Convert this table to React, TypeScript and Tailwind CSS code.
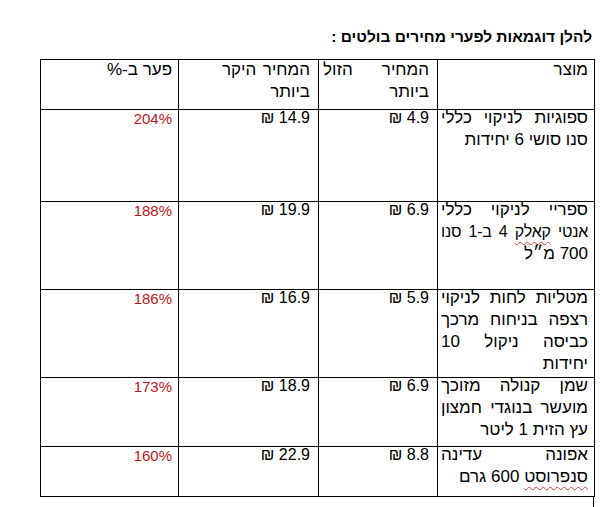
import React from "react";

const Wavy = ({ children }: { children: React.ReactNode }) => (
  <span className="underline decoration-wavy decoration-[#d83a3a] decoration-1 underline-offset-[4px]">
    {children}
  </span>
);

type Line = { t: React.ReactNode; j: boolean; s?: string };
type Row = { lines: Line[]; low: string; high: string; pct: string; h: string };

const rows: Row[] = [
  {
    lines: [
      { t: "ספוגיות לניקוי כללי", j: true },
      { t: "סנו סושי 6 יחידות", j: false },
    ],
    low: "4.9 ₪",
    high: "14.9 ₪",
    pct: "204%",
    h: "h-[92px]",
  },
  {
    lines: [
      { t: "ספריי לניקוי כללי", j: true },
      {
        t: (
          <>
            אנטי <Wavy>קאלק</Wavy> 4 ב-1 סנו
          </>
        ),
        j: true,
        s: "text-[16px] tracking-[-0.2px]",
      },
      { t: "700 מ״ל", j: false },
    ],
    low: "6.9 ₪",
    high: "19.9 ₪",
    pct: "188%",
    h: "h-[88px]",
  },
  {
    lines: [
      { t: "מטליות לחות לניקוי", j: true },
      { t: "רצפה בניחוח מרכך", j: true },
      { t: "כביסה ניקול 10", j: true },
      { t: "יחידות", j: false },
    ],
    low: "5.9 ₪",
    high: "16.9 ₪",
    pct: "186%",
    h: "h-[88px]",
  },
  {
    lines: [
      { t: "שמן קנולה מזוכך", j: true },
      { t: "מועשר בנוגדי חמצון", j: true },
      { t: "עץ הזית 1 ליטר", j: false },
    ],
    low: "6.9 ₪",
    high: "18.9 ₪",
    pct: "173%",
    h: "h-[69px]",
  },
  {
    lines: [
      { t: "אפונה עדינה", j: true },
      {
        t: (
          <>
            <Wavy>סנפרוסט</Wavy> 600 גרם
          </>
        ),
        j: false,
      },
    ],
    low: "8.8 ₪",
    high: "22.9 ₪",
    pct: "160%",
    h: "h-[50px]",
  },
];

const cell = "border border-black align-top p-0 text-right";
const just = "[text-align-last:justify] text-justify";

export default function App() {
  return (
    <div
      className="w-[608px] h-[507px] bg-white text-black overflow-hidden text-[17px] leading-[22px]"
      style={{ fontFamily: '"Liberation Sans", "DejaVu Sans", Arial, sans-serif' }}
    >
      <div dir="rtl" className="w-[594px] pt-[26px] pr-[2px] font-bold text-[15.5px] leading-[22px]">
        להלן דוגמאות לפערי מחירים בולטים :
      </div>
      <table dir="rtl" className="mt-[11px] ml-[40px] w-[554px] table-fixed border-collapse">
        <colgroup>
          <col className="w-[157px]" />
          <col className="w-[119px]" />
          <col className="w-[140px]" />
          <col className="w-[138px]" />
        </colgroup>
        <thead>
          <tr className="h-[50px]">
            <th className={`${cell} font-normal pr-[6px] pl-[3px]`}>
              <div className="-mt-[1px]">מוצר</div>
            </th>
            <th className={`${cell} font-normal pr-[8px] pl-[4px]`}>
              <div className="-mt-[1px]">
                <div className={just}>המחיר הזול</div>
                <div>ביותר</div>
              </div>
            </th>
            <th className={`${cell} font-normal pr-[8px]`}>
              <div className="w-[88px] -mt-[1px]">
                <div className={just}>המחיר היקר</div>
                <div>ביותר</div>
              </div>
            </th>
            <th className={`${cell} font-normal pr-[6px]`}>
              <div className="-mt-[1px]">פער ב-%</div>
            </th>
          </tr>
        </thead>
        <tbody>
          {rows.map((r, i) => (
            <tr key={i} className={r.h}>
              <td className={`${cell} pr-[6px] pl-[3px]`}>
                <div className="-mt-[3px]">
                  {r.lines.map((l, k) => (
                    <div
                      key={k}
                      className={`whitespace-nowrap ${l.j ? just : ""} ${l.s ?? ""}`}
                    >
                      {l.t}
                    </div>
                  ))}
                </div>
              </td>
              <td className={`${cell} pr-[8px] text-[16px]`}>
                <div className="-mt-[3px]">{r.low}</div>
              </td>
              <td className={`${cell} pr-[8px] text-[16px]`}>
                <div className="-mt-[3px]">{r.high}</div>
              </td>
              <td className={`${cell} pr-[6px] text-[15px] text-[#c0141b]`}>
                <div className="-mt-[2px]">{r.pct}</div>
              </td>
            </tr>
          ))}
        </tbody>
      </table>
      <div className="ml-[40px] w-[554px] h-[12px] border-r border-black" />
    </div>
  );
}
